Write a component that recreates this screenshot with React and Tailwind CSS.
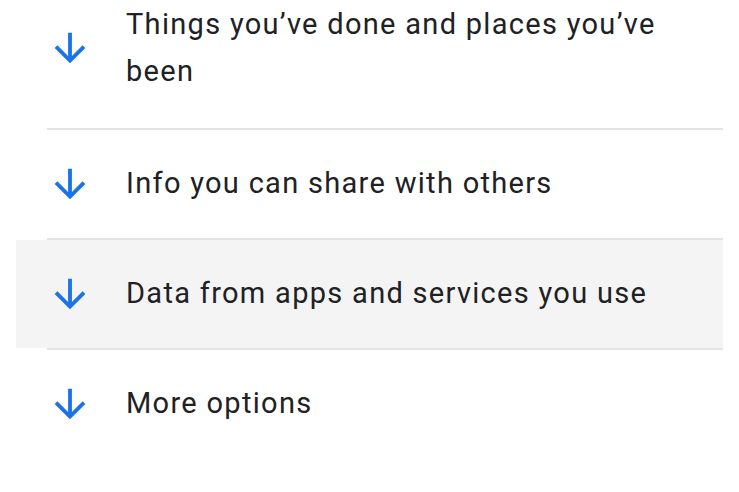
const ITEMS = [
  { label: 'Things you’ve done and places you’ve been' },
  { label: 'Info you can share with others' },
  { label: 'Data from apps and services you use', active: true },
  { label: 'More options' },
];

function ArrowDown() {
  return (
    <svg viewBox="0 0 24 24" className="w-[46px] h-[46px] shrink-0 fill-[#1a73e8]">
      <path d="M20 12l-1.41-1.41L13 16.17V4h-2v12.17l-5.58-5.59L4 12l8 8 8-8z" />
    </svg>
  );
}

export default function App() {
  return (
    <div className="w-[739px] h-[492px] overflow-hidden bg-white font-['Roboto',sans-serif] text-[#202124]">
      <div className="-mt-[30px]">
        {ITEMS.map((item, i) => (
          <div key={i} className="ml-4 w-[707px]">
            {i > 0 && <div className="ml-[31px] h-[2px] bg-[#e3e3e3]" />}
            <div
              className={`flex items-center pl-[31px] pr-6 ${i === 0 ? 'pt-[31px] pb-[33px]' : 'pt-[30px] pb-[31px]'} ${item.active ? 'bg-[#f4f4f4]' : ''}`}
            >
              <ArrowDown />
              <span className="ml-[33px] max-w-[570px] text-[29px] leading-[47px] tracking-[1.3px]">{item.label}</span>
            </div>
          </div>
        ))}
      </div>
    </div>
  );
}
